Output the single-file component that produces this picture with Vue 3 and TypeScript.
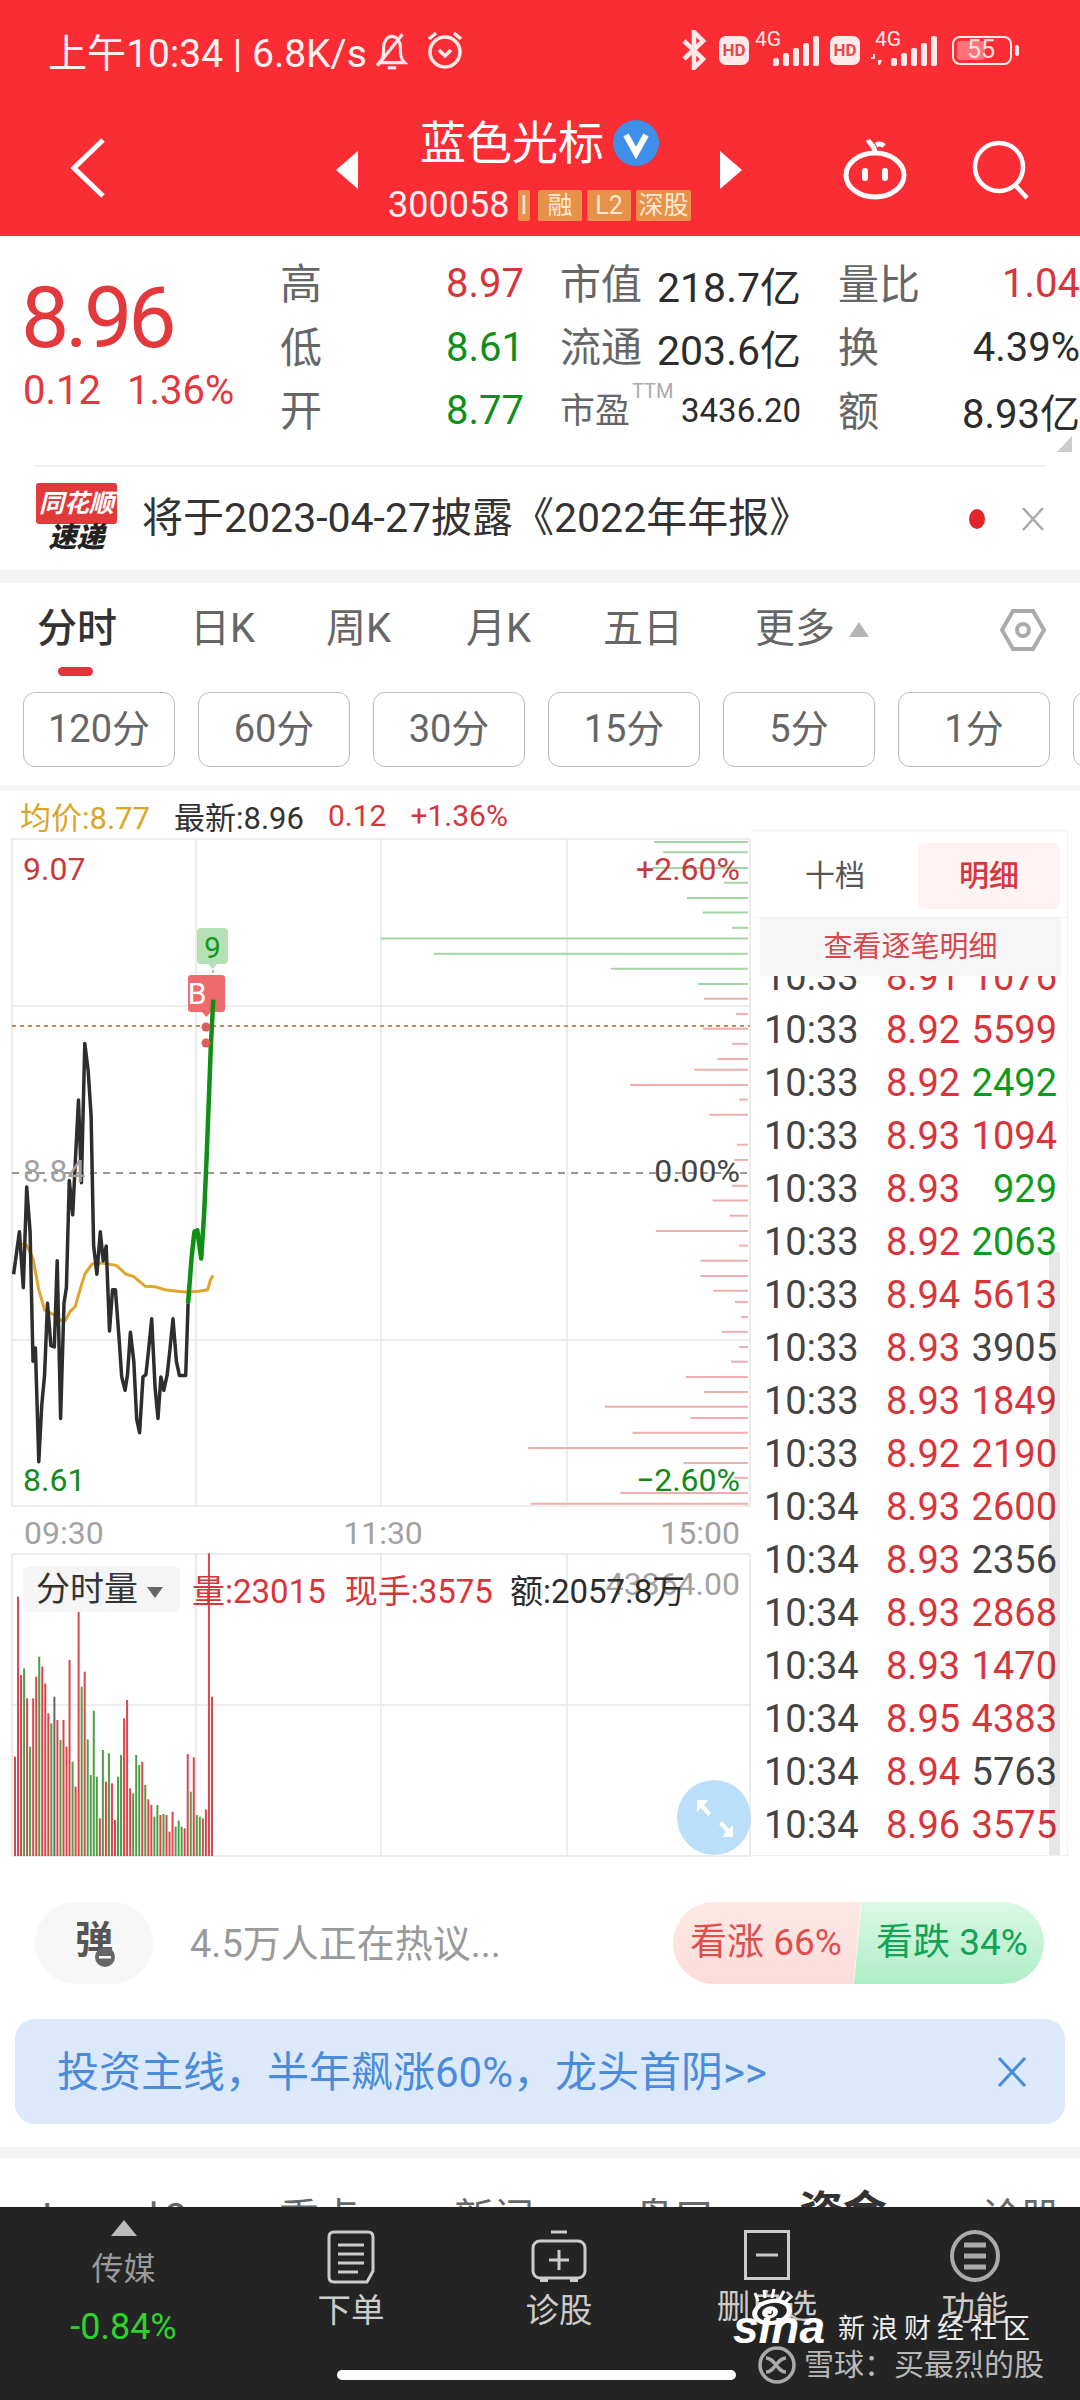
<script setup lang="ts">
const sx = (x: number) => +(x / 2.063).toFixed(1)
const sy = (y: number) => +(y / 2.24 + 830).toFixed(1)
const toPoints = (pts: number[][]) => pts.map(p => `${sx(p[0])},${sy(p[1])}`).join(' ')

const blackLine = toPoints([[28,995],[40,900],[48,1025],[55,800],[62,900],[68,1190],[73,1160],[80,1415],[86,1290],[92,1220],[98,1060],[105,1155],[112,1158],[118,965],[125,1318],[132,1060],[137,1025],[143,785],[150,862],[156,730],[162,605],[168,790],[175,478],[182,540],[188,640],[193,930],[200,995],[207,900],[213,965],[219,932],[226,1122],[232,1030],[238,1030],[245,1130],[251,1225],[258,1255],[263,1220],[269,1125],[276,1190],[282,1320],[288,1350],[295,1225],[301,1220],[307,1160],[313,1095],[320,1250],[326,1318],[332,1225],[338,1255],[345,1220],[351,1160],[357,1095],[364,1190],[370,1222],[383,1222],[388,1060]])
const greenLine = toPoints([[388,1060],[395,960],[401,900],[407,897],[415,960],[421,860],[426,740],[431,600],[435,480],[440,380]])
const avgLine = toPoints([[40,925],[55,930],[68,960],[80,1030],[92,1075],[110,1085],[125,1098],[135,1098],[145,1078],[155,1068],[165,1030],[175,995],[190,972],[210,970],[240,975],[260,995],[275,1000],[300,1022],[320,1023],[340,1030],[370,1034],[388,1035],[410,1033],[428,1030],[435,1005],[440,998]])

const depthGreen = [[27,1350],[50,1368],[85,1345],[118,1493],[152,1417],[185,1450],[219,1510],[243,785],[277,895],[311,1260],[345,1440]]
const depthRed = [[378,1452],[412,1518],[445,1450],[479,1510],[513,1480],[537,1432],[571,1300],[604,1525],[638,1463],[705,1520],[739,1515],[797,1510],[830,1470],[864,1505],[898,1353],[931,1525],[965,1445],[999,1445],[1032,1472],[1057,1516],[1091,1528],[1124,1490],[1158,1525],[1191,1508],[1225,1415],[1259,1453],[1292,1248],[1317,1425],[1350,1305],[1384,1090],[1418,1410],[1451,1515],[1485,1280],[1509,1095]]

// r = red, g = green, top measured on a 3x crop starting at y=1500
const volRaw: [number, string][] = [[770,'r'],[290,'r'],[525,'r'],[505,'g'],[595,'r'],[740,'g'],[595,'r'],[530,'r'],[470,'g'],[500,'r'],[550,'r'],[640,'r'],[670,'g'],[590,'k'],[660,'r'],[720,'g'],[660,'r'],[740,'r'],[480,'r'],[785,'g'],[860,'r'],[200,'r'],[560,'g'],[515,'r'],[718,'g'],[825,'g'],[632,'g'],[830,'g'],[955,'r'],[750,'g'],[845,'r'],[760,'g'],[850,'r'],[960,'r'],[830,'g'],[765,'g'],[655,'r'],[600,'r'],[865,'r'],[880,'g'],[765,'g'],[795,'g'],[785,'r'],[855,'g'],[898,'r'],[915,'r'],[950,'g'],[915,'g'],[945,'r'],[942,'g'],[945,'r'],[995,'r'],[935,'r'],[980,'g'],[962,'g'],[980,'g'],[985,'r'],[762,'r'],[875,'g'],[772,'r'],[945,'g'],[950,'g'],[955,'r'],[928,'r'],[160,'r'],[590,'r']]
const volColors: Record<string, string> = { r: '#d9474c', g: '#4f9e45', k: '#666' }
const volBars = volRaw.map((b, i) => ({
  x: 14 + i * 3.03,
  y: 1500 + b[0] / 3,
  h: 1856 - (1500 + b[0] / 3),
  c: volColors[b[1]],
}))

const quoteRows = [
  { a: '高', v: '8.97', vc: 'red', b: '市值', m: '218.7亿', c: '量比', r: '1.04', rc: 'red' },
  { a: '低', v: '8.61', vc: 'green', b: '流通', m: '203.6亿', c: '换', r: '4.39%', rc: 'dark' },
  { a: '开', v: '8.77', vc: 'green', b: '市盈', ttm: true, m: '3436.20', c: '额', r: '8.93亿', rc: 'dark' },
]
const tabs = ['分时', '日K', '周K', '月K', '五日']
const periods = ['120分', '60分', '30分', '15分', '5分', '1分']

const trades = [
  ['10:33', '8.91', '1076', 'r'], ['10:33', '8.92', '5599', 'r'], ['10:33', '8.92', '2492', 'g'],
  ['10:33', '8.93', '1094', 'r'], ['10:33', '8.93', '929', 'g'], ['10:33', '8.92', '2063', 'g'],
  ['10:33', '8.94', '5613', 'r'], ['10:33', '8.93', '3905', 'k'], ['10:33', '8.93', '1849', 'r'],
  ['10:33', '8.92', '2190', 'r'], ['10:34', '8.93', '2600', 'r'], ['10:34', '8.93', '2356', 'k'],
  ['10:34', '8.93', '2868', 'r'], ['10:34', '8.93', '1470', 'r'], ['10:34', '8.95', '4383', 'r'],
  ['10:34', '8.94', '5763', 'k'], ['10:34', '8.96', '3575', 'r'],
]
const signalBars = [8, 13, 18, 23, 30]
</script>

<template>
  <div class="page">
    <header class="head">
      <div class="status">
        <span class="status-text">上午10:34 | 6.8K/s</span>
        <svg class="st-ico" width="38" height="44" viewBox="0 0 36 42" fill="none" stroke="#ffe9e9" stroke-width="3">
          <path d="M6 33h24c-4-4-4-8-4-14 0-7-4-11-8-11s-8 4-8 11c0 6 0 10-4 14z" />
          <path d="M4 36L28 6" />
          <path d="M14 38h8" />
        </svg>
        <svg class="st-ico alarm" width="40" height="42" viewBox="0 0 40 42" fill="none" stroke="#ffe9e9" stroke-width="3.500">
          <circle cx="20" cy="23" r="15" />
          <path d="M4 10l7-6M36 10l-7-6" />
          <path d="M14 21l6 6 6-6" />
        </svg>
        <span class="status-gap"></span>
        <svg width="25" height="40" viewBox="0 0 25 40" fill="none" stroke="#ffe9e9" stroke-width="4.500">
          <path d="M3 11l19 18-9 9V2l9 9L3 29" />
        </svg>
        <span class="hd hd-first">HD</span>
        <div class="signal">
          <span class="net">4G</span>
          <i v-for="h in signalBars" :key="h" :style="{ height: h + 'px' }"></i>
        </div>
        <span class="hd hd-second">HD</span>
        <div class="signal signal-second">
          <span class="net net-second">4G</span>
          <svg class="updown" width="11" height="11" viewBox="0 0 11 11" fill="#ffe9e9">
            <path d="M0 5h4V0H2V3H0zM7 11V6h4L9 11z" />
          </svg>
          <i v-for="h in signalBars" :key="h" :style="{ height: h + 'px' }"></i>
        </div>
        <div class="battery"><span class="batt-fill"></span><span class="batt-num">55</span></div>
      </div>
      <div class="nav">
        <svg class="back" width="36" height="60" viewBox="0 0 36 60" fill="none" stroke="#fff" stroke-width="5">
          <path d="M33 2L4 30l29 28" />
        </svg>
        <span class="tri tri-left"></span>
        <div class="title-box">
          <div class="title-line">
            <span class="title">蓝色光标</span>
            <svg class="vbadge" width="46" height="46" viewBox="0 0 46 46">
              <circle cx="23" cy="23" r="23" fill="#3f8ee8" />
              <path d="M13 15l10 18 10-18" fill="none" stroke="#fff" stroke-width="6" />
            </svg>
          </div>
          <div class="code-line">
            <span class="code">300058</span>
            <span class="tag tag-cut">I</span>
            <span class="tag">融</span>
            <span class="tag">L2</span>
            <span class="tag tag-wide">深股</span>
          </div>
        </div>
        <span class="tri tri-right"></span>
        <svg class="robot" width="66" height="62" viewBox="0 0 66 62" fill="none" stroke="#fff" stroke-width="5">
          <ellipse cx="33" cy="37" rx="29" ry="22" />
          <path d="M33 15C33 8 28 6 26 2" />
          <path d="M34 7c4-2 6-1 8 1" />
          <path d="M23 33v7M43 33v7" stroke-linecap="round" stroke-width="6" />
        </svg>
        <svg class="search" width="60" height="60" viewBox="0 0 60 60" fill="none" stroke="#fff" stroke-width="4.500">
          <circle cx="27" cy="27" r="24" />
          <path d="M44 46l11 12" />
        </svg>
      </div>
    </header>

    <section class="quote">
      <div class="price-box">
        <div class="price">8.96</div>
        <div class="change"><span>0.12</span><span>1.36%</span></div>
      </div>
      <div class="quote-grid">
        <div v-for="row in quoteRows" :key="row.a" class="quote-row">
          <span class="q-a">{{ row.a }}</span>
          <span class="q-v" :class="row.vc">{{ row.v }}</span>
          <span class="q-b">{{ row.b }}<sup v-if="row.ttm" class="ttm">TTM</sup></span>
          <span class="q-m" :class="{ small: row.ttm }">{{ row.m }}</span>
          <span class="q-c">{{ row.c }}</span>
          <span class="q-r" :class="row.rc">{{ row.r }}</span>
        </div>
      </div>
      <span class="corner"></span>
    </section>

    <section class="notice">
      <div class="ths">
        <div class="ths-top">同花顺</div>
        <div class="ths-bottom">速递</div>
      </div>
      <span class="notice-text">将于2023-04-27披露《2022年年报》</span>
      <span class="dot"></span>
      <svg class="close" width="24" height="26" viewBox="0 0 24 26" fill="none" stroke="#aaa" stroke-width="2.500">
        <path d="M2 2l20 22M22 2L2 24" />
      </svg>
    </section>
    <div class="band band-a"></div>

    <nav class="tabs">
      <div v-for="(t, i) in tabs" :key="t" class="tab" :class="'tab' + i">{{ t }}</div>
      <div class="tab tab5">更多<span class="more-tri"></span></div>
      <svg class="hex" width="46" height="44" viewBox="0 0 46 44" fill="none" stroke="#aaa" stroke-width="4">
        <path d="M13 3h20l11 19-11 19H13L2 22z" />
        <circle cx="23" cy="22" r="6" />
      </svg>
      <span class="tab-line"></span>
    </nav>

    <div class="periods">
      <div v-for="p in periods" :key="p" class="period">{{ p }}</div>
      <div class="period"></div>
    </div>
    <div class="band band-b"></div>

    <div class="legend">
      <span class="gold">均价:8.77</span>
      <span class="ink">最新:8.96</span>
      <span class="red">0.12</span>
      <span class="red">+1.36%</span>
    </div>

    <section class="market">
      <div class="chart">
        <svg class="canvas" width="752" height="1030" viewBox="0 830 752 1030">
          <g stroke="#e6e6e6" stroke-width="1.500" fill="none">
            <path d="M12 839H750V1506H12zM196 839V1506M381 839V1506M567 839V1506M12 1006H750M12 1340H750" />
            <path d="M12 1554H750V1856H12zM196 1554V1856M381 1554V1856M567 1554V1856M12 1705H750" />
          </g>
          <line x1="12" x2="750" y1="1173" y2="1173" stroke="#999" stroke-width="2" stroke-dasharray="7 6" />
          <line v-for="d in depthGreen" :key="d[0]" :x1="sx(d[1])" x2="748" :y1="sy(d[0])" :y2="sy(d[0])" stroke="#a3d6a3" stroke-width="2" />
          <line v-for="d in depthRed" :key="d[0]" :x1="sx(d[1])" x2="748" :y1="sy(d[0])" :y2="sy(d[0])" stroke="#f0adad" stroke-width="2" />
          <line x1="12" x2="750" y1="1026" y2="1026" stroke="#c98a55" stroke-width="2" stroke-dasharray="4 4" />

          <polyline :points="avgLine" fill="none" stroke="#dfa52c" stroke-width="3" />
          <polyline :points="blackLine" fill="none" stroke="#2e2e2e" stroke-width="3.500" stroke-linejoin="round" />

          <rect x="197" y="928" width="31" height="36" rx="4" fill="#b5e0b5" />
          <path d="M208 964h9l-4.500 5z" fill="#b5e0b5" />
          <text x="212.500" y="958" text-anchor="middle" class="t-tag" fill="#0f9a1a">9</text>
          <line x1="213" x2="213" y1="970" y2="1000" stroke="#999" stroke-width="1.500" stroke-dasharray="3 3" />
          <rect x="188" y="975" width="37" height="37" rx="3" fill="#ee6a6c" />
          <path d="M202 1012h9l-4.500 5z" fill="#ee6a6c" />
          <text x="197" y="1004" text-anchor="middle" class="t-tag" fill="#fff">B</text>
          <polyline :points="greenLine" fill="none" stroke="#0f8f14" stroke-width="4.500" stroke-linejoin="round" />
          <circle cx="206" cy="1027" r="4.500" fill="#dc5c5c" />
          <circle cx="206" cy="1043" r="4.500" fill="#dc5c5c" />

          <text x="23" y="880" class="t-axis" fill="#c9383d">9.07</text>
          <text x="740" y="880" text-anchor="end" class="t-axis" fill="#c9383d">+2.60%</text>
          <text x="23" y="1182" class="t-axis" fill="#a0a0a0">8.84</text>
          <text x="740" y="1182" text-anchor="end" class="t-axis" fill="#444">0.00%</text>
          <text x="23" y="1491" class="t-axis" fill="#128a1a">8.61</text>
          <text x="740" y="1491" text-anchor="end" class="t-axis" fill="#128a1a">−2.60%</text>

          <text x="24" y="1544" class="t-time">09:30</text>
          <text x="383" y="1544" text-anchor="middle" class="t-time">11:30</text>
          <text x="740" y="1544" text-anchor="end" class="t-time">15:00</text>

          <rect v-for="(b, i) in volBars" :key="i" :x="b.x" :y="b.y" width="2" :height="b.h" :fill="b.c" />
          <text x="740" y="1595" text-anchor="end" class="t-time">43364.00</text>
        </svg>

        <div class="vol-head">
          <div class="vol-pick">分时量<span class="vol-tri"></span></div>
          <span class="vol-red">量:23015</span>
          <span class="vol-red">现手:3575</span>
          <span class="vol-ink">额:2057.8万</span>
        </div>

        <svg class="expand" width="74" height="75" viewBox="0 0 74 75">
          <ellipse cx="37" cy="37.500" rx="37" ry="37.500" fill="#bcdff9" />
          <path d="M20 20v12l4-4 7 8 3-3-7-8 4-5zM56 57V45l-4 4-7-8-3 3 7 8-4 5z" fill="#fff" />
        </svg>
      </div>

      <aside class="side">
        <div class="side-tabs">
          <span class="side-tab">十档</span>
          <span class="side-tab active">明细</span>
        </div>
        <div class="side-btn">查看逐笔明细</div>
        <div class="trades">
          <div v-for="(t, i) in trades" :key="i" class="trade">
            <span class="t-time-c">{{ t[0] }}</span>
            <span class="t-price red">{{ t[1] }}</span>
            <span class="t-vol" :class="t[3]">{{ t[2] }}</span>
          </div>
          <span class="scroll"></span>
        </div>
      </aside>
    </section>

    <section class="social">
      <div class="danmu">
        <span>弹</span>
        <svg class="danmu-off" width="20" height="20" viewBox="0 0 20 20">
          <circle cx="10" cy="10" r="10" fill="#666" />
          <rect x="4" y="9" width="12" height="2.500" fill="#fff" />
        </svg>
      </div>
      <span class="hot">4.5万人正在热议...</span>
      <div class="vote">
        <div class="vote-up">看涨 66%</div>
        <div class="vote-down">看跌 34%</div>
      </div>
    </section>

    <section class="banner">
      <span class="banner-text">投资主线，半年飙涨60%，龙头首阴&gt;&gt;</span>
      <svg width="30" height="30" viewBox="0 0 30 30" fill="none" stroke="#4a8bdb" stroke-width="3">
        <path d="M2 1l26 28M28 1L2 29" />
      </svg>
    </section>
    <div class="band band-c"></div>

    <div class="sub-tabs">
      <span class="sub s0">Level2</span>
      <span class="sub s1">重点</span>
      <span class="sub s2">新闻</span>
      <span class="sub s3">盘口</span>
      <span class="sub s4">资金</span>
      <span class="sub s5">诊股</span>
    </div>

    <footer class="foot">
      <div class="foot-item sector">
        <span class="up-tri"></span>
        <span class="sector-name">传媒</span>
        <span class="sector-val">-0.84%</span>
      </div>
      <div class="foot-item">
        <svg width="48" height="54" viewBox="0 0 48 54" fill="none" stroke="#ccc" stroke-width="3">
          <path d="M7 2h34q5 0 5 5v34l-6 11H7q-5 0-5-5V7q0-5 5-5z" />
          <path d="M11 15h26M11 24h26M11 33h26M11 42h20" />
        </svg>
        <span class="foot-label">下单</span>
      </div>
      <div class="foot-item">
        <svg width="56" height="54" viewBox="0 0 56 54" fill="none" stroke="#ccc" stroke-width="3">
          <path d="M20 2h16" />
          <rect x="2" y="11" width="52" height="37" rx="7" />
          <path d="M28 20v20M18 30h20" />
          <path d="M9 50h8M39 50h8" stroke-width="4" />
        </svg>
        <span class="foot-label">诊股</span>
      </div>
      <div class="foot-item">
        <svg width="46" height="50" viewBox="0 0 46 50" fill="none" stroke="#ccc" stroke-width="3">
          <rect x="1.500" y="1.500" width="43" height="47" />
          <path d="M12 25h22" />
        </svg>
        <span class="foot-label">删自选</span>
      </div>
      <div class="foot-item">
        <svg width="50" height="52" viewBox="0 0 50 52" fill="none" stroke="#aaa" stroke-width="4">
          <ellipse cx="25" cy="26" rx="23" ry="24" />
          <path d="M14 15h22M14 26h22M14 37h22" stroke-width="5" />
        </svg>
        <span class="foot-label">功能</span>
      </div>
      <span class="home-bar"></span>
      <div class="mark">
        <div class="mark-top">
          <div class="sina">
            <svg class="sina-eye" width="46" height="38" viewBox="0 0 46 38">
              <path d="M8 13L5 5M15 10L14 2M22 10L24 1M29 12L34 3M34 15L42 8" stroke="#fff" stroke-width="3" fill="none" />
              <g transform="rotate(-10 22 24)">
                <ellipse cx="22" cy="24" rx="20" ry="13" fill="#fff" />
                <ellipse cx="22" cy="24" rx="15" ry="9" fill="#242424" />
                <ellipse cx="20" cy="24" rx="8" ry="6" fill="#fff" />
                <circle cx="20" cy="24" r="3" fill="#242424" />
              </g>
            </svg>
            <span class="sina-word">sina</span>
          </div>
          <span class="mark-title">新浪财经社区</span>
        </div>
        <div class="mark-bottom">
          <svg width="38" height="38" viewBox="0 0 38 38" fill="none" stroke="#aaa" stroke-width="3.500">
            <circle cx="19" cy="19" r="17" />
            <path d="M8 12c9 0 11 14 20 14M8 26c9 0 11-14 20-14" />
          </svg>
          <span>雪球：买最烈的股</span>
        </div>
      </div>
    </footer>
  </div>
</template>

<style scoped>
.page {
  position: relative;
  width: 1080px;
  height: 2400px;
  overflow: hidden;
  background: #fff;
  font-family: Roboto, "Noto Sans CJK SC", sans-serif;
  color: #333;
}
.red { color: #d8353b; }
.green { color: #0e8f18; }
.dark { color: #2c2c2c; }
.gold { color: #dba526; }
.ink { color: #333; }

/* header */
.head { height: 236px; background: #fa2d35; color: #fff; }
.status {
  height: 100px;
  padding: 0 68px 0 48px;
  display: flex;
  align-items: center;
  box-sizing: border-box;
}
.status-text { font-size: 39px; white-space: nowrap; color: #fff2f2; }
.st-ico { margin-left: 6px; flex: none; }
.alarm { margin-left: 14px; }
.status-gap { flex: 1; }
.hd {
  margin-left: 11px;
  width: 30px;
  height: 29px;
  border-radius: 7px;
  background: #ffeaea;
  color: #e8484c;
  font-size: 17px;
  font-weight: 700;
  line-height: 29px;
  text-align: center;
  flex: none;
}
.hd-first { margin-left: 13px; }
.hd-second { margin-left: 11px; }
.signal {
  position: relative;
  margin-left: 6px;
  width: 64px;
  height: 31px;
  display: flex;
  align-items: flex-end;
  justify-content: flex-end;
  gap: 4px;
  flex: none;
}
.signal-second { margin-left: 13px; }
.signal i { display: block; width: 6px; background: #ffe9e9; border-radius: 2px; }
.net { position: absolute; left: 0; top: -6px; font-size: 21px; line-height: 21px; color: #ffe9e9; }
.net-second { left: 2px; }
.updown { position: absolute; left: -2px; bottom: 1px; }
.battery {
  position: relative;
  margin-left: 15px;
  width: 60px;
  height: 29px;
  border: 2.500px solid #ffe9e9;
  border-radius: 8px;
  box-sizing: border-box;
  flex: none;
}
.battery::after {
  content: "";
  position: absolute;
  right: -9px;
  top: 7px;
  width: 4px;
  height: 11px;
  border-radius: 2px;
  background: #ffe9e9;
}
.batt-fill { position: absolute; left: 3px; top: 3px; bottom: 3px; width: 28px; background: #ffffff55; border-radius: 3px; }
.batt-num { position: absolute; left: 13px; top: -2px; font-size: 25px; line-height: 28px; color: #ffe1e1; }

.nav { height: 136px; position: relative; display: flex; align-items: flex-start; }
.back { margin: 38px 0 0 70px; flex: none; }
.tri { flex: none; width: 0; height: 0; border-top: 19px solid transparent; border-bottom: 19px solid transparent; margin-top: 51px; }
.tri-left { margin-left: 230px; border-right: 22px solid #fff; }
.tri-right { margin-left: 28px; border-left: 22px solid #fff; }
.title-box { margin-left: 30px; width: 304px; flex: none; }
.title-line { display: flex; align-items: center; height: 58px; padding-left: 32px; margin-top: 14px; }
.title { font-size: 46px; line-height: 58px; }
.vbadge { margin-left: 9px; }
.code-line { display: flex; align-items: center; height: 32px; margin-top: 17px; }
.code { font-size: 36px; width: 128px; color: #fff0f0; flex: none; }
.tag {
  height: 31px;
  width: 44px;
  margin-left: 5px;
  background: #e8914b;
  color: #ffe9d3;
  font-size: 25px;
  line-height: 31px;
  text-align: center;
  border-radius: 2px;
  flex: none;
}
.tag-cut { width: 12px; margin-left: 2px; margin-right: 3px; overflow: hidden; }
.tag-wide { width: 55px; overflow: hidden; white-space: nowrap; }
.robot { position: absolute; left: 842px; top: 38px; }
.search { position: absolute; left: 972px; top: 40px; }

/* quote */
.quote { position: relative; height: 229px; display: flex; align-items: flex-start; }
.price-box { width: 280px; flex: none; padding: 37px 0 0 21px; box-sizing: border-box; color: #e3383c; }
.price { font-size: 86px; line-height: 90px; letter-spacing: -4px; }
.change { display: flex; gap: 26px; padding-left: 2px; font-size: 40px; line-height: 50px; margin-top: 3px; white-space: nowrap; }
.quote-grid { padding-top: 16px; flex: 1; }
.quote-row { height: 63.500px; display: flex; align-items: center; white-space: nowrap; }
.q-a { width: 42px; margin-top: -6px; font-size: 42px; color: #666; flex: none; }
.q-v { width: 202px; text-align: right; font-size: 40px; flex: none; }
.q-b { margin: -6px 0 0 36px; width: 94px; font-size: 41px; color: #666; flex: none; position: relative; }
.ttm { font-size: 20px; color: #aaa; position: absolute; left: 72px; top: -3px; line-height: 24px; }
.quote-row:last-child .q-b { font-size: 35px; }
.q-m { width: 147px; text-align: right; font-size: 41px; color: #2c2c2c; flex: none; }
.q-m.small { font-size: 33px; }
.q-c { margin: -6px 0 0 37px; width: 84px; font-size: 41px; color: #666; flex: none; }
.q-r { width: 158px; text-align: right; font-size: 40px; flex: none; }
.corner { position: absolute; right: 8px; top: 200px; width: 0; height: 0; border-left: 15px solid transparent; border-bottom: 16px solid #ccc; }

/* notice */
.notice {
  height: 105px;
  margin: 0 34px;
  padding: 0 1px 0 2px;
  border-top: 2px solid #f1f1f1;
  display: flex;
  align-items: center;
  box-sizing: border-box;
}
.ths { position: relative; width: 81px; flex: none; text-align: center; margin-top: -2px; }
.ths-top {
  background: #e23a3a;
  color: #fff;
  height: 41px;
  font-size: 25px;
  line-height: 41px;
  font-weight: 700;
  font-style: italic;
  border-radius: 3px;
  white-space: nowrap;
}
.ths-bottom { font-size: 28px; line-height: 28px; font-weight: 900; font-style: italic; color: #222; }
.notice-text { margin: -10px 0 0 25px; font-size: 41px; color: #333; white-space: nowrap; flex: 1; }
.dot { width: 16px; height: 20px; border-radius: 50%; background: #e3262c; flex: none; }
.close { margin-left: 36px; flex: none; }
.band { background: #f5f5f5; }
.band-a { height: 13px; }
.band-b { height: 6px; margin-top: 18px; }
.band-c { height: 11px; margin-top: 23px; }

/* tabs */
.tabs { position: relative; height: 109px; }
.tab { position: absolute; top: 21px; font-size: 40px; line-height: 50px; color: #666; white-space: nowrap; }
.tab0 { left: 37px; color: #333; font-weight: 500; }
.tab1 { left: 190px; }
.tab2 { left: 326px; }
.tab3 { left: 466px; }
.tab4 { left: 603px; }
.tab5 { left: 755px; }
.more-tri {
  display: inline-block;
  margin-left: 14px;
  vertical-align: 5px;
  width: 0;
  height: 0;
  border-left: 10px solid transparent;
  border-right: 10px solid transparent;
  border-bottom: 15px solid #b5b5b5;
}
.hex { position: absolute; left: 1000px; top: 25px; }
.tab-line { position: absolute; left: 58px; top: 84px; width: 35px; height: 9px; border-radius: 5px; background: #e3343a; }

.periods { display: flex; gap: 23px; padding-left: 23px; height: 75px; width: 1300px; }
.period {
  width: 152px;
  height: 75px;
  flex: none;
  box-sizing: border-box;
  border: 1.500px solid #bbb;
  border-radius: 12px;
  font-size: 38px;
  line-height: 72px;
  color: #666;
  text-align: center;
}

.legend {
  height: 39px;
  padding: 9px 0 0 20px;
  box-sizing: border-box;
  display: flex;
  align-items: center;
  font-size: 31px;
  white-space: nowrap;
}
.legend .ink { margin-left: 24px; }
.legend .red { margin-left: 24px; font-size: 30px; }

/* chart */
.market { display: flex; height: 1026px; }
.chart { position: relative; width: 752px; flex: none; }
.canvas { display: block; }
.t-axis { font-size: 32px; font-family: Roboto, sans-serif; }
.t-time { font-size: 32px; fill: #a2a2a2; font-family: Roboto, sans-serif; }
.t-tag { font-size: 30px; font-family: Roboto, sans-serif; }
.vol-head {
  position: absolute;
  left: 23px;
  top: 736px;
  height: 46px;
  display: flex;
  align-items: center;
  white-space: nowrap;
  font-size: 33px;
}
.vol-pick {
  width: 157px;
  height: 46px;
  box-sizing: border-box;
  padding-left: 13px;
  background: #f6f5f5;
  border-radius: 6px;
  font-size: 34px;
  line-height: 46px;
  color: #333;
  margin-right: 12px;
}
.vol-tri {
  display: inline-block;
  margin-left: 9px;
  vertical-align: 3px;
  width: 0;
  height: 0;
  border-left: 8px solid transparent;
  border-right: 8px solid transparent;
  border-top: 11px solid #666;
}
.vol-red { color: #d8353b; margin-right: 19px; }
.vol-ink { color: #2c2c2c; margin-left: -2px; }
.expand { position: absolute; left: 677px; top: 950px; }

/* side */
.side { width: 316px; flex: none; border: solid #f0f0f0; border-width: 1.500px 1.500px 1.500px 0; box-sizing: border-box; position: relative; }
.side-tabs { height: 87px; display: flex; align-items: center; padding-top: 3px; border-bottom: 1.500px solid #f1f1f1; box-sizing: border-box; }
.side-tab { width: 166px; flex: none; font-size: 30px; color: #555; text-align: center; line-height: 66px; }
.side-tab.active { width: 142px; background: #fdf3f3; color: #d8353b; border-radius: 6px; font-weight: 500; }
.side-btn {
  height: 58px;
  margin: 0 6px 0 8px;
  background: #f6f6f6;
  color: #d8474b;
  font-size: 29px;
  line-height: 58px;
  text-align: center;
}
.trades { position: relative; height: 879px; overflow: hidden; }
.trade {
  height: 53px;
  display: flex;
  align-items: center;
  font-size: 38px;
  padding-left: 12px;
  white-space: nowrap;
}
.trade:first-child { margin-top: -26px; }
.t-time-c { width: 122px; color: #444; flex: none; }
.t-price { width: 70px; flex: none; }
.t-vol { width: 101px; text-align: right; flex: none; }
.t-vol.r { color: #d8353b; }
.t-vol.g { color: #0e9a1a; }
.t-vol.k { color: #444; }
.scroll { position: absolute; right: 7px; top: 276px; bottom: 0; width: 11px; background: #00000018; }

/* social */
.social { height: 163px; display: flex; align-items: center; padding: 11px 36px 0 36px; box-sizing: border-box; }
.danmu {
  position: relative;
  width: 118px;
  height: 82px;
  flex: none;
  margin-left: -1px;
  border-radius: 41px;
  background: #f7f7f7;
  font-size: 38px;
  font-weight: 700;
  color: #555;
  text-align: center;
  line-height: 76px;
}
.danmu-off { position: absolute; left: 60px; top: 45px; }
.hot { margin: -6px 0 0 37px; font-size: 38px; color: #999; white-space: nowrap; flex: 1; }
.vote { display: flex; width: 371px; height: 82px; flex: none; font-size: 37px; line-height: 82px; white-space: nowrap; }
.vote-up {
  width: 188px;
  flex: none;
  padding-left: 17px;
  box-sizing: border-box;
  border-radius: 41px 0 0 41px;
  background: linear-gradient(#fde9e7, #fbdcd9);
  color: #de4f4c;
  clip-path: polygon(0 0, 100% 0, 96% 100%, 0 100%);
}
.vote-down {
  width: 190px;
  margin-left: -7px;
  flex: none;
  padding-left: 22px;
  box-sizing: border-box;
  border-radius: 0 41px 41px 0;
  background: linear-gradient(#dcf8e6, #aeeec5);
  color: #11a455;
  clip-path: polygon(4% 0, 100% 0, 100% 100%, 0 100%);
}

.banner {
  margin: 0 15px;
  height: 105px;
  padding: 0 38px 0 42px;
  border-radius: 20px;
  background: #dce9fb;
  color: #4a8bdb;
  font-size: 42px;
  display: flex;
  align-items: center;
  justify-content: space-between;
  white-space: nowrap;
}
.banner-text { margin-top: -6px; }

.sub-tabs { position: relative; height: 60px; }
.sub { position: absolute; top: 36px; font-size: 40px; line-height: 50px; color: #666; white-space: nowrap; }
.s0 { left: 42px; letter-spacing: 6px; }
.s1 { left: 279px; }
.s2 { left: 454px; }
.s3 { left: 634px; }
.s4 { left: 799px; top: 27px; font-size: 44px; line-height: 56px; color: #333; font-weight: 700; }
.s5 { left: 981px; }

/* footer */
.foot {
  position: absolute;
  left: 0;
  right: 0;
  top: 2207px;
  height: 193px;
  background: #242424;
  display: grid;
  grid-template-columns: 247px 208px 208px 208px 208px;
  align-items: start;
}
.foot-item { display: flex; flex-direction: column; align-items: center; padding-top: 23px; color: #ccc; }
.foot-label { font-size: 33.500px; line-height: 42px; margin-top: 6px; white-space: nowrap; }
.sector { padding-top: 13px; }
.up-tri { width: 0; height: 0; border-left: 13px solid transparent; border-right: 13px solid transparent; border-bottom: 16px solid #bbb; }
.sector-name { margin-top: 13px; font-size: 32px; line-height: 40px; color: #999; }
.sector-val { margin-top: 17px; font-size: 36px; line-height: 42px; color: #2bd42b; }
.home-bar { position: absolute; left: 337px; top: 163px; width: 399px; height: 10px; border-radius: 5px; background: #fff; }

.mark { position: absolute; left: 733px; top: 81px; width: 330px; color: #ddd; }
.mark-top { display: flex; align-items: flex-end; height: 57px; }
.sina { position: relative; width: 94px; height: 57px; flex: none; }
.sina-eye { position: absolute; left: 17px; top: 0; }
.sina-word { position: absolute; left: 0; bottom: -4px; font: italic 700 46px/44px "Liberation Sans", sans-serif; color: #fff; }
.mark-title { margin: 0 0 -4px 11px; font-size: 27px; line-height: 40px; letter-spacing: 6px; white-space: nowrap; color: #eee; }
.mark-bottom { display: flex; align-items: center; gap: 8px; margin-left: 25px; font-size: 30px; line-height: 40px; white-space: nowrap; color: #b8b8b8; }
</style>

<style>
html, body { margin: 0; background: #fff; }
</style>
